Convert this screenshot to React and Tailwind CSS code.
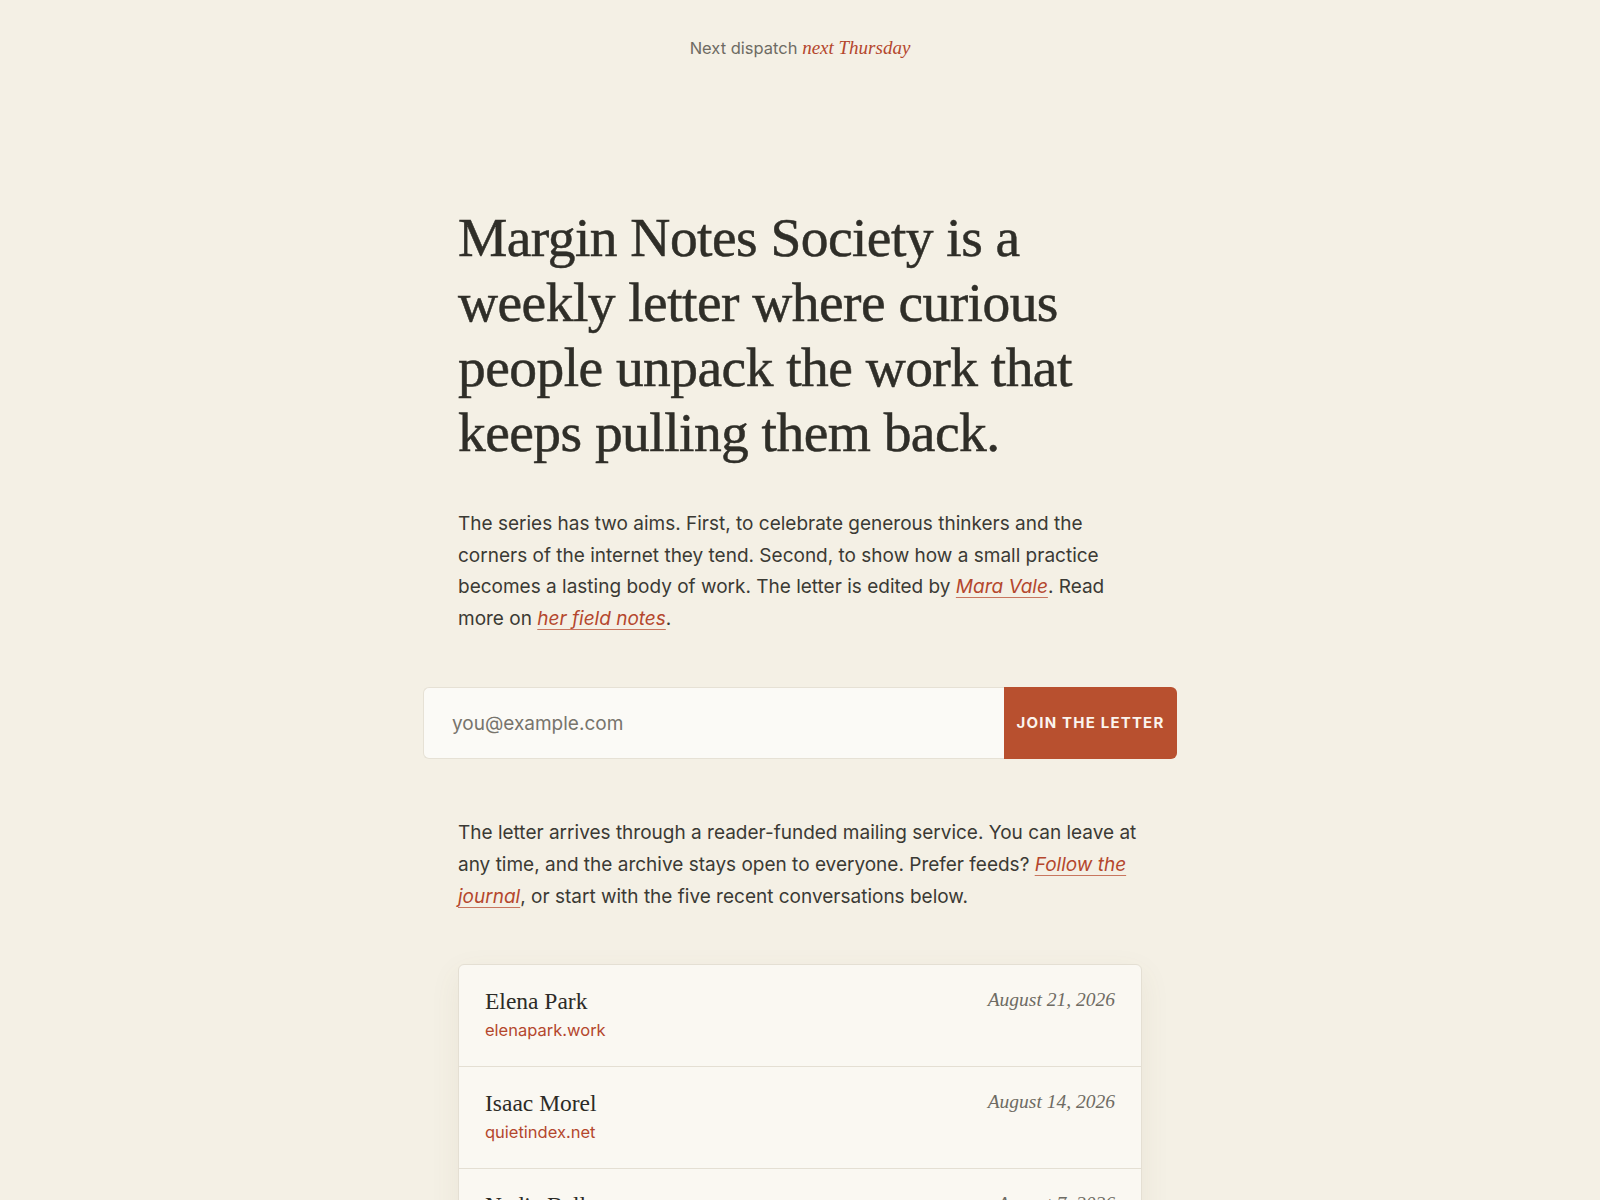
const issues = [
  { name: 'Elena Park', site: 'elenapark.work', date: 'August 21, 2026' },
  { name: 'Isaac Morel', site: 'quietindex.net', date: 'August 14, 2026' },
  { name: 'Nadia Bell', site: 'bellnotes.org', date: 'August 7, 2026' },
  { name: 'Tomas Reyes', site: 'slowreading.co', date: 'July 31, 2026' },
  { name: 'Priya Anand', site: 'anand.studio', date: 'July 24, 2026' },
];

const sans = "font-['Inter','Liberation_Sans',sans-serif]";
const serif = "font-['Liberation_Serif','DejaVu_Serif',serif]";

const TextLink = ({ children }) => (
  <a href="#" className="italic text-[#b4472d] underline decoration-[#c8765f] decoration-1 underline-offset-[4px]">
    {children}
  </a>
);

export default function App() {
  return (
    <div className={`min-h-screen bg-[#f4f0e5] ${sans}`}>
      <div className="pt-9 text-center text-[16.5px] leading-6 text-[#6e6b63]">
        Next dispatch{' '}
        <span className={`${serif} text-[19px] italic text-[#b4472d]`}>next Thursday</span>
      </div>

      <main className="mx-auto mt-[145px] w-[684px] pb-24">
        <h1 className={`${serif} text-[55.5px] leading-[65px] tracking-[-0.01em] text-[#2f2e28] [-webkit-text-stroke:0.5px_#2f2e28]`}>
          Margin Notes Society is a weekly letter where curious people unpack the work that keeps pulling them back.
        </h1>

        <p className="mt-[43px] text-[19px] leading-[31.6px] text-[#3b3a34]">
          The series has two aims. First, to celebrate generous thinkers and the corners of the internet they tend.
          Second, to show how a small practice becomes a lasting body of work. The letter is edited by{' '}
          <TextLink>Mara Vale</TextLink>. Read more on <TextLink>her field notes</TextLink>.
        </p>

        <form className="-mx-[35px] mt-[53px] flex h-[72px]" onSubmit={(event) => event.preventDefault()}>
          <input
            type="email"
            placeholder="you@example.com"
            className="h-full flex-1 rounded-l-md border border-r-0 border-[#e6e1d5] bg-[#fbfaf6] px-7 text-[19px] text-[#3b3a34] outline-none placeholder:text-[#77746c]"
          />
          <button
            type="submit"
            className="h-full w-[173px] rounded-r-md bg-[#b8502f] text-[15px] font-bold uppercase tracking-[0.08em] text-[#fbf4ee]"
          >
            Join the letter
          </button>
        </form>

        <p className="mt-[58px] text-[19px] leading-[31.6px] text-[#3b3a34]">
          The letter arrives through a reader-funded mailing service. You can leave at any time, and the archive stays
          open to everyone. Prefer feeds? <TextLink>Follow the journal</TextLink>, or start with the five recent
          conversations below.
        </p>

        <ul className="mt-[52px] overflow-hidden rounded-md border border-[#e4dfd3] bg-[#faf8f2] shadow-[0_10px_30px_rgba(120,100,60,0.08)]">
          {issues.map((issue) => (
            <li key={issue.name} className="flex items-start justify-between border-b border-[#e4dfd3] px-[26px] pb-[24px] pt-[21px] last:border-b-0">
              <div>
                <div className={`${serif} text-[23.5px] leading-[30px] text-[#2c2b26]`}>{issue.name}</div>
                <a href="#" className="mt-[2px] block text-[16.5px] leading-6 text-[#b4472d]">
                  {issue.site}
                </a>
              </div>
              <div className={`${serif} pt-[2px] text-[19.5px] italic leading-6 text-[#6e6b63]`}>{issue.date}</div>
            </li>
          ))}
        </ul>
      </main>
    </div>
  );
}
